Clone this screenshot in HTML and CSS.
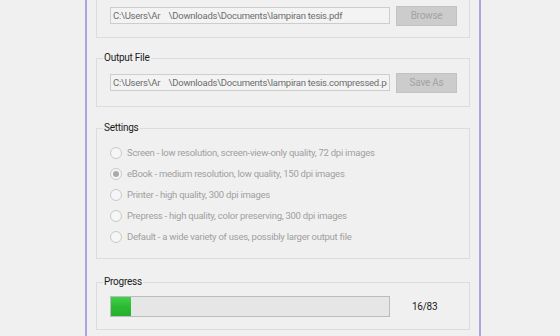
FILE: index.html
```html
<!DOCTYPE html>
<html>
<head>
<meta charset="utf-8">
<link rel="stylesheet" href="styles.css">
</head>
<body>
<div class="window">
  <div class="group group-first">
    <div class="file-row">
      <div class="textbox"><span class="path">C:\Users\Ar&nbsp;&nbsp;&nbsp;&nbsp;\Downloads\Documents\lampiran tesis.pdf</span></div>
      <div class="button">Browse</div>
    </div>
  </div>
  <div class="group group-output">
    <span class="legend">Output File</span>
    <div class="file-row">
      <div class="textbox"><span class="path">C:\Users\Ar&nbsp;&nbsp;&nbsp;&nbsp;\Downloads\Documents\lampiran tesis.compressed.pdf</span></div>
      <div class="button">Save As</div>
    </div>
  </div>
  <div class="group group-settings">
    <span class="legend">Settings</span>
    <div class="radio-list">
      <div class="radio"><span class="dot"></span><span class="rlabel">Screen - low resolution, screen-view-only quality, 72 dpi images</span></div>
      <div class="radio checked"><span class="dot"></span><span class="rlabel">eBook - medium resolution, low quality, 150 dpi images</span></div>
      <div class="radio"><span class="dot"></span><span class="rlabel">Printer - high quality, 300 dpi images</span></div>
      <div class="radio"><span class="dot"></span><span class="rlabel">Prepress - high quality, color preserving, 300 dpi images</span></div>
      <div class="radio"><span class="dot"></span><span class="rlabel">Default - a wide variety of uses, possibly larger output file</span></div>
    </div>
  </div>
  <div class="group group-progress">
    <span class="legend">Progress</span>
    <div class="progress-row">
      <div class="progress"><div class="fill" style="width:20px"></div></div>
      <span class="count">16/83</span>
    </div>
  </div>
</div>
</body>
</html>
```

FILE: styles.css
```css
html, body {
  margin: 0;
  padding: 0;
  background: #f0f0f0;
  width: 560px;
  height: 336px;
  overflow: hidden;
  font-family: Roboto, "Liberation Sans", sans-serif;
  font-size: 9.5px;
  letter-spacing: -0.25px;
}

.window {
  margin-left: 85px;
  width: 374px;
  height: 336px;
  border-left: 2px solid #a8a6dc;
  border-right: 2px solid #a8a6dc;
  padding: 0 9px;
  box-sizing: content-box;
  display: flex;
  flex-direction: column;
}

.group {
  position: relative;
  border: 1px solid #dcdcdc;
  padding: 0 13px;
  flex: none;
}

.legend {
  position: absolute;
  left: 6px;
  top: -8px;
  padding: 0 1px;
  background: #f0f0f0;
  color: #1b1b1b;
  line-height: 14px;
  font-size: 10px;
}

.group-first {
  margin-top: -10px;
  padding-top: 15px;
  padding-bottom: 11px;
}

.group-output {
  margin-top: 20px;
  padding-top: 14px;
  padding-bottom: 13px;
}

.group-settings {
  margin-top: 21px;
  padding-top: 13px;
  padding-bottom: 11px;
}

.group-progress {
  margin-top: 23px;
  padding-top: 13px;
  padding-bottom: 12px;
}

.file-row {
  display: flex;
  align-items: flex-start;
  gap: 6px;
}

.textbox {
  width: 280px;
  height: 17px;
  box-sizing: border-box;
  border: 1px solid #cdcdcd;
  background: #f3f3f3;
  color: #6d6d6d;
  line-height: 15px;
  padding-left: 2px;
  overflow: hidden;
  margin-top: 1px;
  flex: none;
}

.path {
  display: block;
  white-space: nowrap;
  overflow: hidden;
  width: 274px;
}

.button {
  width: 61px;
  height: 20px;
  box-sizing: border-box;
  border: 1px solid #c2c2c2;
  background: #cccccc;
  color: #a3a3a3;
  text-align: center;
  line-height: 18px;
  font-size: 10px;
  flex: none;
}

.radio-list {
  display: flex;
  flex-direction: column;
}

.radio {
  height: 21px;
  display: flex;
  align-items: center;
  gap: 5px;
  color: #a0a0a0;
}

.dot {
  width: 12px;
  height: 12px;
  box-sizing: border-box;
  border: 1px solid #c9c9c9;
  border-radius: 50%;
  background: #f6f6f6;
  display: flex;
  align-items: center;
  justify-content: center;
  flex: none;
}

.radio.checked .dot::after {
  content: "";
  width: 6px;
  height: 6px;
  border-radius: 50%;
  background: #a9a9a9;
}

.rlabel {
  white-space: nowrap;
}

.progress-row {
  display: flex;
  align-items: center;
  gap: 22px;
}

.progress {
  width: 280px;
  height: 21px;
  box-sizing: border-box;
  border: 1px solid #bcbcbc;
  background: #e6e6e6;
  flex: none;
}

.fill {
  height: 100%;
  background: linear-gradient(#45d04a, #2bba32 50%, #26b02d);
}

.count {
  color: #1b1b1b;
  font-size: 10px;
}
```
